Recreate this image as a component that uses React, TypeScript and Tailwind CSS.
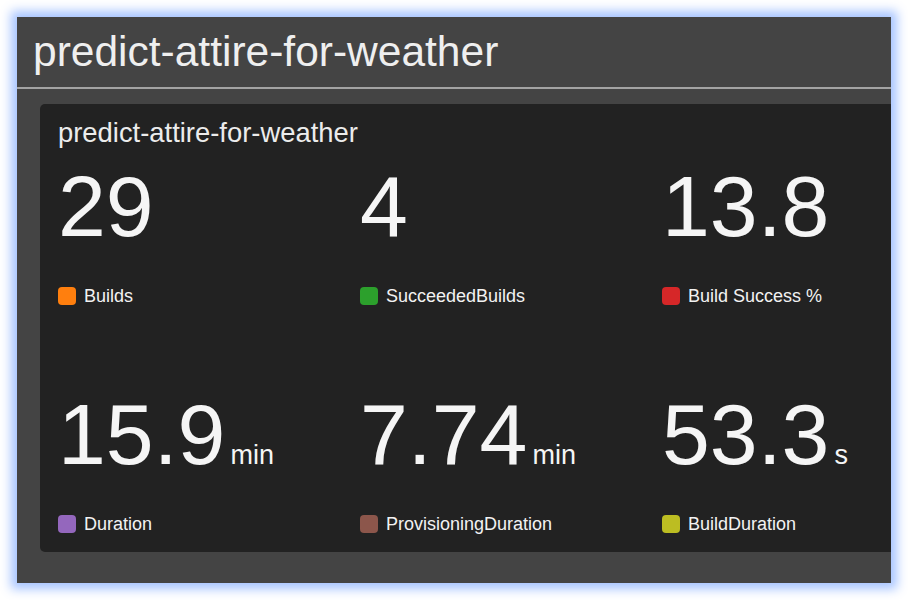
import React from "react";

type Stat = { value: string; unit?: string; label: string; color: string };

const stats: Stat[] = [
  { value: "29", label: "Builds", color: "#ff7f0e" },
  { value: "4", label: "SucceededBuilds", color: "#2ca02c" },
  { value: "13.8", label: "Build Success %", color: "#d62728" },
  { value: "15.9", unit: "min", label: "Duration", color: "#9467bd" },
  { value: "7.74", unit: "min", label: "ProvisioningDuration", color: "#8c564b" },
  { value: "53.3", unit: "s", label: "BuildDuration", color: "#bcbd22" },
];

function StatCell({ s, top }: { s: Stat; top: boolean }) {
  return (
    <div className={top ? "flex flex-col" : "flex flex-col pt-[85px]"}>
      <div className="flex items-baseline h-[86px]">
        <span className="text-[86px] leading-[86px] text-[#f5f5f5]">{s.value}</span>
        {s.unit && <span className="ml-[5px] text-[27px] leading-[27px] text-[#f5f5f5]">{s.unit}</span>}
      </div>
      <div className="mt-[37px] flex items-center h-[20px]">
        <span className="w-[18px] h-[18px] rounded-[4px]" style={{ backgroundColor: s.color }} />
        <span className="ml-[8px] text-[18px] leading-[20px] text-[#f2f2f2]">{s.label}</span>
      </div>
    </div>
  );
}

export default function App() {
  return (
    <div className="w-[908px] h-[600px] bg-white p-[17px]" style={{ fontFamily: '"Liberation Sans", Arial, sans-serif' }}>
      <div className="w-[874px] h-[566px] bg-[#444444] overflow-hidden flex flex-col shadow-[0_0_10px_6px_rgba(150,186,255,0.85)]">
        <div className="h-[70px] pl-[16px] pt-[11px] flex-none">
          <div className="text-[42.5px] leading-[48px] text-[#efefef]">predict-attire-for-weather</div>
        </div>
        <div className="h-[2px] bg-[#a3a3a3] flex-none" />
        <div className="pt-[15px] pl-[23px] flex-none">
          <div className="w-[900px] h-[448px] bg-[#222222] rounded-[5px] pl-[18px] pt-[13px]">
            <div className="text-[27.4px] leading-[32px] text-[#ececec]">predict-attire-for-weather</div>
            <div className="mt-[14px] grid grid-cols-[302px_302px_302px]">
              {stats.map((s, i) => (
                <StatCell key={s.label} s={s} top={i < 3} />
              ))}
            </div>
          </div>
        </div>
      </div>
    </div>
  );
}
